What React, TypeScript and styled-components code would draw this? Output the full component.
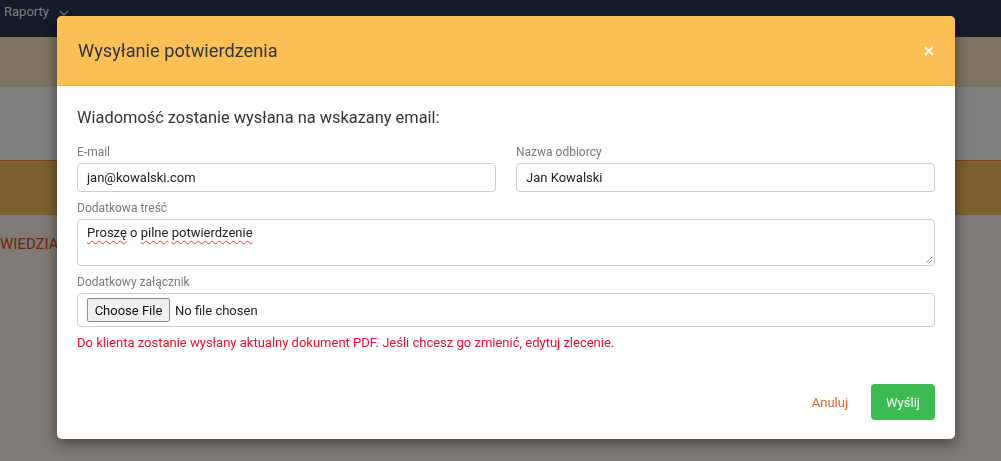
import React from "react";
import styled, { createGlobalStyle } from "styled-components";

const GlobalStyle = createGlobalStyle`
  html, body { margin: 0; padding: 0; }
  body {
    font-family: Roboto, "Liberation Sans", Arial, sans-serif;
    overflow: hidden;
    width: 1001px;
    height: 461px;
  }
  * { box-sizing: border-box; }
`;

const Page = styled.div`
  height: 461px;
  display: flex;
  flex-direction: column;
  background: #fef4ea;
`;

const NavBar = styled.div`
  height: 37px;
  flex: none;
  background: #2c3654;
  display: flex;
  align-items: flex-start;
  padding: 3px 0 0 4px;
  gap: 10px;
  color: #f2f4fa;
  font-size: 13px;
  line-height: 18px;
`;

const Band = styled.div<{ $h: number; $bg: string; $border?: string }>`
  height: ${(p) => p.$h}px;
  flex: none;
  background: ${(p) => p.$bg};
  border-top: ${(p) => (p.$border ? `1px solid ${p.$border}` : "none")};
`;

const Content = styled.div`
  flex: 1;
  padding: 20px 0 0 0;
  color: #e8461c;
  font-size: 15px;
  line-height: 18px;
  text-transform: uppercase;
`;

const Backdrop = styled.div`
  position: fixed;
  inset: 0;
  background: rgba(0, 0, 0, 0.5);
`;

const Modal = styled.div`
  margin: 16px 0 0 57px;
  width: 898px;
  background: #fff;
  border-radius: 5px;
  overflow: hidden;
  box-shadow: 0 5px 15px rgba(0, 0, 0, 0.45);
`;

const Header = styled.div`
  height: 70px;
  background: #fcbf55;
  border-bottom: 1px solid #efb04a;
  display: flex;
  align-items: center;
  justify-content: space-between;
  padding: 1px 21px 0 21px;
`;

const Title = styled.h4`
  margin: 0;
  font-size: 18.2px;
  font-weight: 400;
  color: #2f3540;
  line-height: 24px;
`;

const CloseButton = styled.button`
  border: 0;
  background: none;
  padding: 0;
  width: 10px;
  height: 10px;
  display: flex;
  cursor: pointer;
  opacity: 0.85;
`;

const Body = styled.div`
  padding: 20px 20px 20px 20px;
`;

const Lead = styled.p`
  margin: 0 0 14px;
  font-size: 16.4px;
  line-height: 24px;
  color: #333;
`;

const Row = styled.div`
  display: grid;
  grid-template-columns: 1fr 1fr;
  column-gap: 20px;
`;

const Field = styled.div`
  margin-bottom: 8px;
`;

const Label = styled.label`
  display: block;
  font-size: 12px;
  line-height: 16px;
  color: #777;
  margin-bottom: 3px;
`;

const Input = styled.input`
  display: block;
  width: 100%;
  height: 29px;
  border: 1px solid #ccc;
  border-radius: 4px;
  padding: 0 9px;
  font-family: inherit;
  font-size: 13px;
  color: #222;
  outline: none;
`;

const TextBox = styled.div`
  position: relative;
  height: 47px;
  border: 1px solid #ccc;
  border-radius: 4px;
  padding: 3px 9px;
  font-size: 13px;
  line-height: 20px;
  color: #222;
`;

const Misspelled = styled.span`
  text-decoration: underline wavy #e53935;
  text-decoration-thickness: 1px;
  text-decoration-skip-ink: none;
  text-underline-offset: 3px;
`;

const Grip = styled.svg`
  position: absolute;
  right: 1px;
  bottom: 1px;
`;

const FileBox = styled.div`
  height: 34px;
  border: 1px solid #ccc;
  border-radius: 4px;
  padding: 4px 9px;
  display: flex;
  align-items: center;
  gap: 5px;
  font-size: 13px;
  color: #222;
`;

const FileButton = styled.button`
  height: 24px;
  width: 83px;
  border: 1px solid #8f8f8f;
  border-radius: 2px;
  background: #efefef;
  font-family: inherit;
  font-size: 13px;
  color: #111;
  padding: 0;
`;

const Note = styled.p`
  margin: 7px 0 0;
  font-size: 13px;
  line-height: 16px;
  color: #ec0f2f;
`;

const Footer = styled.div`
  display: flex;
  justify-content: flex-end;
  align-items: center;
  gap: 23px;
  padding: 13px 20px 19px;
`;

const LinkButton = styled.button`
  border: 0;
  background: none;
  padding: 0;
  font-family: inherit;
  font-size: 13px;
  color: #e4632a;
  cursor: pointer;
`;

const PrimaryButton = styled.button`
  height: 36px;
  width: 64px;
  border: 0;
  border-radius: 4px;
  background: #3cba54;
  color: #fff;
  font-family: inherit;
  font-size: 13px;
  cursor: pointer;
`;

export default function App() {
  return (
    <>
      <GlobalStyle />
      <Page>
        <NavBar>
          <span>Raporty</span>
          <svg width="10" height="18" viewBox="0 0 10 18">
            <path d="M1 8 L5 12 L9 8" fill="none" stroke="#f2f4fa" strokeWidth="1.2" />
          </svg>
        </NavBar>
        <Band $h={50} $bg="#faE8c4" />
        <Band $h={73} $bg="#ffffff" />
        <Band $h={55} $bg="#f8c05c" $border="#f47a3c" />
        <Content>WIEDZIALNY</Content>
      </Page>
      <Backdrop>
        <Modal>
          <Header>
            <Title>Wysyłanie potwierdzenia</Title>
            <CloseButton aria-label="Zamknij">
              <svg width="10" height="10" viewBox="0 0 10 10">
                <path d="M1 1 L9 9 M9 1 L1 9" stroke="#fff" strokeWidth="2" />
              </svg>
            </CloseButton>
          </Header>
          <Body>
            <Lead>Wiadomość zostanie wysłana na wskazany email:</Lead>
            <Row>
              <Field>
                <Label>E-mail</Label>
                <Input defaultValue="jan@kowalski.com" />
              </Field>
              <Field>
                <Label>Nazwa odbiorcy</Label>
                <Input defaultValue="Jan Kowalski" />
              </Field>
            </Row>
            <Field>
              <Label>Dodatkowa treść</Label>
              <TextBox>
                <Misspelled>Proszę</Misspelled> o <Misspelled>pilne</Misspelled>{" "}
                <Misspelled>potwierdzenie</Misspelled>
                <Grip width="9" height="9" viewBox="0 0 9 9">
                  <path d="M8 2 L2 8 M8 5 L5 8" stroke="#555" strokeWidth="1" strokeDasharray="1 1" />
                </Grip>
              </TextBox>
            </Field>
            <Field>
              <Label>Dodatkowy załącznik</Label>
              <FileBox>
                <FileButton type="button">Choose File</FileButton>
                <span>No file chosen</span>
              </FileBox>
            </Field>
            <Note>
              Do klienta zostanie wysłany aktualny dokument PDF. Jeśli chcesz go zmienić, edytuj zlecenie.
            </Note>
          </Body>
          <Footer>
            <LinkButton>Anuluj</LinkButton>
            <PrimaryButton>Wyślij</PrimaryButton>
          </Footer>
        </Modal>
      </Backdrop>
    </>
  );
}
